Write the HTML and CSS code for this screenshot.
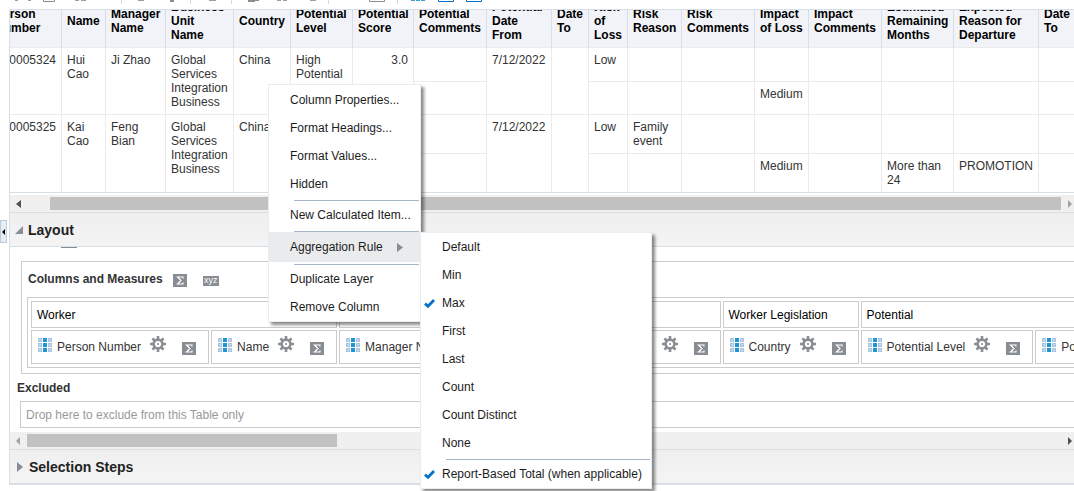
FILE: index.html
```html
<!DOCTYPE html>
<html lang="en">
<head>
<meta charset="utf-8">
<title>Analysis Editor</title>
<link rel="stylesheet" href="styles.css">
</head>
<body>
<svg class="defs" aria-hidden="true">
  <symbol id="grid" viewBox="0 0 14 14">
    <path fill="#a9c3de" d="M0 0h4v4H0zM0 5h4v4H0zM0 10h4v4H0zM10 0h4v4h-4zM10 5h4v4h-4zM10 10h4v4h-4z"/>
    <path fill="#c3d6ea" d="M1 1h2v2H1zM1 6h2v2H1zM1 11h2v2H1zM11 1h2v2h-2zM11 6h2v2h-2zM11 11h2v2h-2z"/>
    <path fill="#1c96d4" d="M5 0h4v4H5zM5 5h4v4H5zM5 10h4v4H5z"/>
  </symbol>
  <symbol id="gear" viewBox="0 0 16 16">
    <g fill="none" stroke="#878d92">
      <circle cx="8" cy="8" r="4.4" stroke-width="2.6"/>
      <path stroke-width="2.6" d="M8 0v3M8 13v3M0 8h3M13 8h3M2.4 2.4l2 2M11.6 11.6l2 2M13.6 2.4l-2 2M4.4 11.6l-2 2"/>
    </g>
    <circle cx="8" cy="8" r="1.1" fill="#878d92"/>
  </symbol>
  <symbol id="sigma" viewBox="0 0 14 13">
    <path fill="#878d92" d="M0 0h14v13H0z"/>
    <path fill="none" stroke="#fff" stroke-width="1.2" d="M10 4.500V3H4.500L8 6.500 4.500 10H10V8.500"/>
  </symbol>
  <symbol id="check" viewBox="0 0 11 9">
    <path fill="none" stroke="#0572ce" stroke-width="2.8" d="M1 4.600l3 2.700L10 1"/>
  </symbol>
</svg>

<div class="app">
  <aside class="rail">
    <button class="handle" type="button" aria-label="Expand pane"><svg width="3" height="6" viewBox="0 0 3 6"><path d="M3 0v6L0 3z"/></svg></button>
  </aside>

  <main class="main">
    <div class="toolbar">
      <svg width="480" height="9" viewBox="9 0 480 9" aria-hidden="true">
        <path fill="#9a9fa3" d="M15 0h3v1h-3zM28 0h3v1h-3zM75 0h4v1h-4zM81 0h5v1h-5zM138 0h6v1h-6zM209 0h7v1h-7zM277 0h4v1h-4zM283 0h4v1h-4zM310 0h6v1h-6z"/>
        <path fill="#878d92" d="M170 0h4v2h-4zM248 0h7v2h-7zM255 0h4v1h-4z"/>
        <path fill="none" stroke="#878d92" d="M43.500 0v1.500h11V0M369.500 0v1.500h15V0"/>
        <path fill="#d3dae1" d="M121 0h1v4h-1zM190 0h1v4h-1zM231 0h1v4h-1zM328 0h1v4h-1zM397 0h1v4h-1z"/>
        <path fill="#3aa0dc" d="M411 0h4v1h-4zM416 0h4v1h-4zM421 0h4v1h-4z"/>
        <path fill="none" stroke="#0572ce" d="M438.500 0v1.500h15V0M466.500 0v1.500h15V0"/>
      </svg>
    </div>

    <section class="panel">
      <div class="results">
        <table>
          <colgroup>
            <col class="w72"><col class="w44"><col class="w60"><col class="w68"><col class="w57"><col class="w62"><col class="w61"><col class="w73"><col class="w65"><col class="w37"><col class="w39"><col class="w54"><col class="w73"><col class="w54"><col class="w73"><col class="w72"><col class="w85"><col class="w37">
          </colgroup>
          <thead>
            <tr><th>Person Number</th><th>Name</th><th>Manager Name</th><th>Business Unit Name</th><th>Country</th><th>Potential Level</th><th>Potential Score</th><th>Potential Comments</th><th>Potential Date From</th><th>Date To</th><th>Risk of Loss</th><th>Risk Reason</th><th>Risk Comments</th><th>Impact of Loss</th><th>Impact Comments</th><th>Estimated Remaining Months</th><th>Expected Reason for Departure</th><th>Date To</th></tr>
          </thead>
          <tbody>
            <tr class="r34"><td rowspan="2" class="num">0005324</td><td rowspan="2">Hui Cao</td><td rowspan="2">Ji Zhao</td><td rowspan="2">Global Services Integration Business</td><td rowspan="2">China</td><td rowspan="2">High Potential</td><td rowspan="2" class="num">3.0</td><td></td><td rowspan="2">7/12/2022</td><td rowspan="2"></td><td>Low</td><td></td><td></td><td></td><td></td><td></td><td></td><td></td></tr>
            <tr class="r33"><td></td><td></td><td></td><td></td><td>Medium</td><td></td><td></td><td></td><td></td></tr>
            <tr class="r39"><td rowspan="2" class="num">0005325</td><td rowspan="2">Kai Cao</td><td rowspan="2">Feng Bian</td><td rowspan="2">Global Services Integration Business</td><td rowspan="2">China</td><td rowspan="2"></td><td rowspan="2"></td><td></td><td rowspan="2">7/12/2022</td><td rowspan="2"></td><td>Low</td><td>Family event</td><td></td><td></td><td></td><td></td><td></td><td></td></tr>
            <tr class="r39"><td></td><td></td><td></td><td></td><td>Medium</td><td></td><td>More than 24</td><td>PROMOTION</td><td></td></tr>
          </tbody>
        </table>
      </div>
      <div class="scrollbar results-scroll">
        <svg width="5" height="8" viewBox="0 0 5 8"><path fill="#505050" d="M5 0v8L0 4z"/></svg>
        <div class="track"><div class="thumb"></div></div>
        <svg width="4" height="8" viewBox="0 0 4 8"><path fill="#a3a3a3" d="M0 0v8l4-4z"/></svg>
      </div>

      <h2 class="bar"><svg class="open" width="8" height="8" viewBox="0 0 8 8"><path fill="#878d92" d="M8 0v8H0z"/></svg>Layout</h2>

      <div class="layout">
        <div class="layout-inner">
          <div class="stub"></div>
          <div class="measures">
            <div class="measures-head"><h3>Columns and Measures</h3><svg class="sigma" aria-hidden="true"><use href="#sigma"/></svg><span class="xyz">xyz</span></div>
            <div class="groups">
              <div class="group">
                <div class="group-name">Worker</div>
                <div class="items">
                  <div class="item"><svg class="grid"><use href="#grid"/></svg><span>Person Number</span><button class="gear" type="button" aria-label="Person Number options"><svg><use href="#gear"/></svg></button><svg class="sigma"><use href="#sigma"/></svg></div>
                  <div class="item"><svg class="grid"><use href="#grid"/></svg><span>Name</span><button class="gear" type="button" aria-label="Name options"><svg><use href="#gear"/></svg></button><svg class="sigma"><use href="#sigma"/></svg></div>
                </div>
              </div>
              <div class="group">
                <div class="group-name"></div>
                <div class="items">
                  <div class="item"><svg class="grid"><use href="#grid"/></svg><span>Manager Name</span><button class="gear" type="button" aria-label="Manager Name options"><svg><use href="#gear"/></svg></button><svg class="sigma"><use href="#sigma"/></svg></div>
                  <div class="item"><svg class="grid"><use href="#grid"/></svg><span>Business Unit Name</span><button class="gear" type="button" aria-label="Business Unit Name options"><svg><use href="#gear"/></svg></button><svg class="sigma"><use href="#sigma"/></svg></div>
                </div>
              </div>
              <div class="group">
                <div class="group-name">Worker Legislation</div>
                <div class="items">
                  <div class="item"><svg class="grid"><use href="#grid"/></svg><span>Country</span><button class="gear" type="button" aria-label="Country options"><svg><use href="#gear"/></svg></button><svg class="sigma"><use href="#sigma"/></svg></div>
                </div>
              </div>
              <div class="group">
                <div class="group-name">Potential</div>
                <div class="items">
                  <div class="item"><svg class="grid"><use href="#grid"/></svg><span>Potential Level</span><button class="gear" type="button" aria-label="Potential Level options"><svg><use href="#gear"/></svg></button><svg class="sigma"><use href="#sigma"/></svg></div>
                  <div class="item"><svg class="grid"><use href="#grid"/></svg><span>Potential Score</span><button class="gear" type="button" aria-label="Potential Score options"><svg><use href="#gear"/></svg></button><svg class="sigma"><use href="#sigma"/></svg></div>
                </div>
              </div>
            </div>
          </div>
          <h3 class="excluded">Excluded</h3>
          <div class="drop">Drop here to exclude from this Table only</div>
        </div>
      </div>
      <div class="scrollbar layout-scroll">
        <svg width="4" height="8" viewBox="0 0 4 8"><path fill="#a3a3a3" d="M4 0v8L0 4z"/></svg>
        <div class="track"><div class="thumb"></div></div>
        <svg width="4" height="8" viewBox="0 0 4 8"><path fill="#505050" d="M0 0v8l4-4z"/></svg>
      </div>

      <h2 class="bar last"><svg class="closed" width="6" height="10" viewBox="0 0 6 10"><path fill="#878d92" d="M0 0v10l6-5z"/></svg>Selection Steps</h2>
    </section>
  </main>

  <div class="menu column-menu" role="menu">
    <button type="button" role="menuitem">Column Properties...</button>
    <button type="button" role="menuitem">Format Headings...</button>
    <button type="button" role="menuitem">Format Values...</button>
    <button type="button" role="menuitem">Hidden</button>
    <hr>
    <button type="button" role="menuitem">New Calculated Item...</button>
    <hr>
    <button type="button" role="menuitem" class="active" aria-haspopup="true" aria-expanded="true">Aggregation Rule<svg class="arrow" width="6" height="9" viewBox="0 0 6 9"><path fill="#878d92" d="M0 0v9l6-4.500z"/></svg></button>
    <hr>
    <button type="button" role="menuitem">Duplicate Layer</button>
    <button type="button" role="menuitem">Remove Column</button>
  </div>

  <div class="menu rule-menu" role="menu">
    <button type="button" role="menuitemradio" aria-checked="false">Default</button>
    <button type="button" role="menuitemradio" aria-checked="false">Min</button>
    <button type="button" role="menuitemradio" aria-checked="true"><svg class="check"><use href="#check"/></svg>Max</button>
    <button type="button" role="menuitemradio" aria-checked="false">First</button>
    <button type="button" role="menuitemradio" aria-checked="false">Last</button>
    <button type="button" role="menuitemradio" aria-checked="false">Count</button>
    <button type="button" role="menuitemradio" aria-checked="false">Count Distinct</button>
    <button type="button" role="menuitemradio" aria-checked="false">None</button>
    <hr>
    <button type="button" role="menuitemcheckbox" aria-checked="true"><svg class="check"><use href="#check"/></svg>Report-Based Total (when applicable)</button>
  </div>
</div>
</body>
</html>
```

FILE: styles.css
```css
* { box-sizing: border-box; }

body {
  margin: 0;
  overflow: hidden;
  background: #fff;
  color: #333;
  font: 12px/14px "Liberation Sans", Arial, sans-serif;
}

svg { display: block; flex: none; }
h2, h3 { margin: 0; font-size: 12px; line-height: 14px; }
button { font: inherit; color: inherit; cursor: pointer; }
.defs { position: absolute; width: 0; height: 0; }

.app { position: relative; display: flex; min-height: 100vh; }

/* Collapsed side pane */
.rail { flex: none; width: 9px; padding-top: 220px; }
.handle {
  display: flex;
  align-items: center;
  justify-content: center;
  width: 7px;
  height: 23px;
  padding: 0;
  border: 1px solid #bccbd9;
  background: #e9eef3;
}

.main { flex: 1; min-width: 0; }
.toolbar { height: 9px; overflow: hidden; }
.panel { border-top: 1px solid #d6dfe6; border-left: 1px solid #d6dfe6; }

/* Results table */
.results { overflow: hidden; }
table {
  width: 1086px;
  margin: -16px 0 0 -20px;
  table-layout: fixed;
  border-spacing: 0;
}
.w37 { width: 37px; }
.w39 { width: 39px; }
.w44 { width: 44px; }
.w54 { width: 54px; }
.w57 { width: 57px; }
.w60 { width: 60px; }
.w61 { width: 61px; }
.w62 { width: 62px; }
.w65 { width: 65px; }
.w68 { width: 68px; }
.w72 { width: 72px; }
.w73 { width: 73px; }
.w85 { width: 85px; }
th, td {
  padding: 5px 4px 5px 5px;
  border-right: 1px solid #ebebeb;
  border-bottom: 1px solid #ebebeb;
  text-align: left;
  vertical-align: top;
}
th {
  height: 54px;
  border-right-color: #d6dfe6;
  background: #f1f3f8;
  color: #000;
  vertical-align: middle;
}
.num { padding-right: 5px; text-align: right; }
.r33 { height: 33px; }
.r34 { height: 34px; }
.r39 { height: 39px; }
tbody tr:last-child td, .r39 td[rowspan] { border-bottom-color: #d6dfe6; }

/* Scrollbars */
.scrollbar {
  display: flex;
  align-items: center;
  height: 17px;
  background: #f0f0f0;
}
.track { flex: 1; }
.thumb { height: 13px; background: #c1c1c1; }
.results-scroll { margin-top: 2px; padding: 0 2px 0 6px; }
.results-scroll .track { margin: 0 7px 0 29px; }
.layout-scroll { padding: 0 2px 0 6px; }
.layout-scroll .track { margin: 0 7px; }
.layout-scroll .thumb { width: 30%; }

/* Section bars */
.bar {
  display: flex;
  align-items: center;
  height: 35px;
  padding-left: 5px;
  border-top: 1px solid #d6dfe6;
  border-bottom: 1px solid #d6dfe6;
  background: linear-gradient(#efefef, #f4f4f4);
  color: #222;
  font-size: 14px;
  line-height: 16px;
}
.open { margin-right: 5px; }
.closed { margin: 0 6px 0 2px; }
.last { height: 36px; border-bottom: 2px solid #d9dfe4; }

/* Layout section */
.layout { overflow: hidden; }
.layout-inner { min-width: max-content; padding: 0 0 4px 7px; }
.stub { width: 16px; height: 1px; margin: 0 0 13px 44px; background: #878d92; }
.measures {
  margin-left: 4px;
  padding: 0 0 5px 5px;
  border: 1px solid #ccc;
}
.measures-head {
  display: flex;
  align-items: center;
  height: 34px;
  margin-bottom: 1px;
  padding-left: 1px;
}
.measures-head .sigma { margin: 3px 16px 0 10px; }
.xyz {
  width: 16px;
  height: 10px;
  margin-top: 4px;
  background: #878d92;
  color: #fff;
  font-size: 9px;
  line-height: 9px;
  text-align: center;
}
.groups { display: flex; gap: 2px; padding: 3px; border: 1px solid #ccc; }
.group { display: flex; flex-direction: column; gap: 2px; }
.group-name { height: 27px; padding: 6px 5px; border: 1px solid #ccc; color: #000; }
.items { display: flex; gap: 2px; }
.item {
  display: flex;
  align-items: center;
  flex: 1 0 auto;
  height: 34px;
  padding: 0 12px 0 6px;
  border: 1px solid #ccc;
  white-space: nowrap;
}
.grid { width: 14px; height: 14px; margin: 0 5px 4px 0; }
.gear {
  width: 16px;
  height: 16px;
  margin: 0 16px 6px 9px;
  padding: 0;
  border: 0;
  background: none;
}
.gear svg { width: 16px; height: 16px; }
.sigma { width: 14px; height: 13px; }
.item .sigma { margin-top: 2px; }
.excluded { margin: 7px 0 6px; }
.drop {
  height: 27px;
  margin-left: 3px;
  padding: 6px 5px;
  border: 1px solid #ccc;
  color: #999;
}

/* Context menus */
.menu {
  position: absolute;
  display: flex;
  flex-direction: column;
  border: 1px solid #e6edf3;
  background: #fff;
  box-shadow: 3px 3px 3px rgba(0, 0, 0, 0.45);
  color: #1c1c1c;
}
.menu button {
  position: relative;
  display: flex;
  align-items: center;
  height: 28px;
  padding: 0 9px 0 21px;
  border: 0;
  background: none;
  text-align: left;
  white-space: nowrap;
}
.menu hr {
  width: auto;
  height: 1px;
  margin: 2px 1px 0 25px;
  border: 0;
  background: #a6b5c9;
}
.menu .active { height: 30px; background: #eaebec; }
.arrow { margin-left: 14px; }
.column-menu { top: 84px; left: 268px; width: 153px; padding-top: 1px; }
.rule-menu { top: 232px; left: 420px; width: 232px; }
.check { position: absolute; left: 3px; width: 11px; height: 9px; }
```
